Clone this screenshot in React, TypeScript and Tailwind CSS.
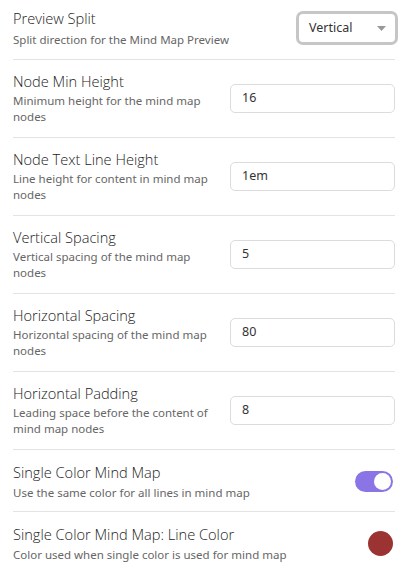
/**
 * Mind map preview settings — a list of label/description rows,
 * each with a control on the right (select, text input, switch, colour).
 */

type Row =
  | { kind: 'input'; title: string; desc: string; value: string }
  | { kind: 'switch'; title: string; desc: string; on: boolean }
  | { kind: 'color'; title: string; desc: string; color: string };

const ROWS: Row[] = [
  { kind: 'input', title: 'Node Min Height', desc: 'Minimum height for the mind map nodes', value: '16' },
  { kind: 'input', title: 'Node Text Line Height', desc: 'Line height for content in mind map nodes', value: '1em' },
  { kind: 'input', title: 'Vertical Spacing', desc: 'Vertical spacing of the mind map nodes', value: '5' },
  { kind: 'input', title: 'Horizontal Spacing', desc: 'Horizontal spacing of the mind map nodes', value: '80' },
  { kind: 'input', title: 'Horizontal Padding', desc: 'Leading space before the content of mind map nodes', value: '8' },
  { kind: 'switch', title: 'Single Color Mind Map', desc: 'Use the same color for all lines in mind map', on: true },
  { kind: 'color', title: 'Single Color Mind Map: Line Color', desc: 'Color used when single color is used for mind map', color: '#9c3333' },
];

const TITLE = "font-['Open_Sans',sans-serif] font-light text-[14.6px] leading-[20px] text-[#222]";

export default function App() {
  return (
    <div className="h-[579px] overflow-hidden bg-white px-[13px] font-['Noto_Sans',sans-serif] text-[#333]">
      {/* Preview split select */}
      <div className="flex items-center justify-between border-b border-[#e3e3e3] pt-[8px] pb-[11px]">
        <div>
          <div className={TITLE}>Preview Split</div>
          <div className="mt-[4px] text-[11.5px] leading-[16px] text-[#666]">
            Split direction for the Mind Map Preview
          </div>
        </div>
        <div className="-mr-[3px] flex h-[34px] w-[102px] items-center justify-between rounded-[7px] border-[3px] border-[#c6c6c6] pr-[9px] pl-[10px] text-[12.5px] text-[#333]">
          <span>Vertical</span>
          <svg width="9" height="5" viewBox="0 0 9 5" className="text-[#999]">
            <path d="M0 0h9L4.5 5z" fill="currentColor" />
          </svg>
        </div>
      </div>

      {ROWS.map((row) => (
        <SettingRow key={row.title} row={row} />
      ))}
    </div>
  );
}

/* ── Row ─────────────────────────────── */

function SettingRow({ row }: { row: Row }) {
  const last = row.kind === 'color';
  const compact = row.kind !== 'input';
  return (
    <div
      className={`flex items-center gap-[17px] ${last ? '' : 'border-b border-[#e3e3e3]'} ${
        compact ? 'pt-[12px] pb-[10px]' : 'pt-[11px] pb-[12px]'
      }`}
    >
      <div className="min-w-0 flex-1">
        <div className={TITLE}>{row.title}</div>
        <div className={`${compact ? 'mt-[3px]' : 'mt-[2px]'} text-[11.5px] leading-[16px] text-[#666]`}>
          {row.desc}
        </div>
      </div>

      {row.kind === 'input' && (
        <div className="flex h-[29px] w-[165px] shrink-0 items-center rounded-[5px] border border-[#dcdcdc] pl-[11px] text-[12.5px] text-[#333]">
          {row.value}
        </div>
      )}

      {row.kind === 'switch' && (
        <div className="mr-[2px] flex h-[21px] w-[38px] shrink-0 items-center justify-end rounded-full bg-[#8b74e6] pr-[2px]">
          <span className="h-[17px] w-[17px] rounded-full bg-white" />
        </div>
      )}

      {row.kind === 'color' && (
        <span
          className="mr-[2px] h-[25px] w-[25px] shrink-0 rounded-full"
          style={{ backgroundColor: row.color }}
        />
      )}
    </div>
  );
}
